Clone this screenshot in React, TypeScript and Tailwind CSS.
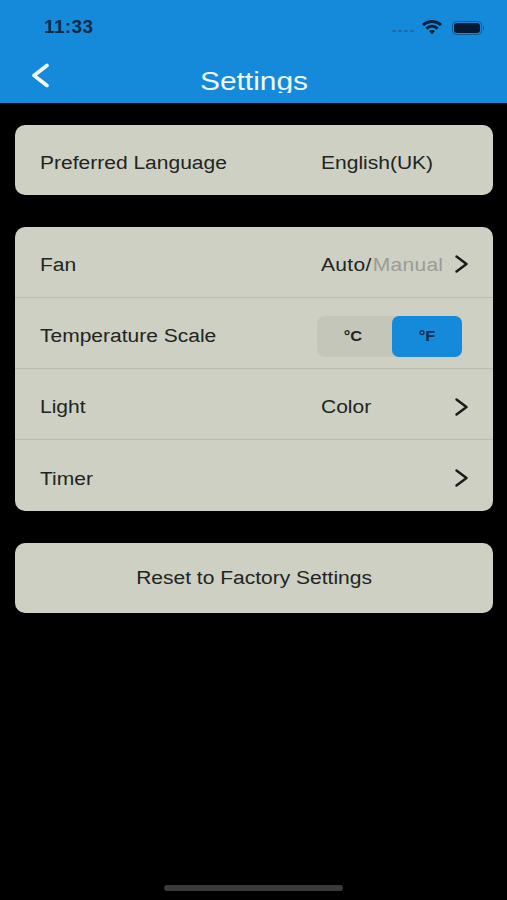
const font = "font-['Liberation_Sans',Arial,sans-serif]";

function Chevron({ lift = 0 }: { lift?: number }) {
  return (
    <svg width="16" height="20" viewBox="0 0 16 20" fill="none" className={`ml-auto shrink-0 ${lift ? "mb-[4px]" : "mb-[2px]"}`}>
      <path d="M2.5 2.5 L12.5 10 L2.5 17.5" stroke="#1b1b1b" strokeWidth="2.5" strokeLinecap="round" strokeLinejoin="round" />
    </svg>
  );
}

function Wide({ children }: { children: React.ReactNode }) {
  return <span className="inline-block origin-left scale-x-[1.167] whitespace-nowrap text-[18px] text-[#22241f]">{children}</span>;
}

function Row({ label, children, border = true }: { label: string; children?: React.ReactNode; border?: boolean }) {
  return (
    <div className={`flex h-[71px] items-center pl-[25px] pr-[23px] pt-[7px] ${border ? "border-b border-[#b9bbae]" : ""}`}>
      <div className="w-[281px] shrink-0">
        <Wide>{label}</Wide>
      </div>
      {children}
    </div>
  );
}

export default function App() {
  return (
    <div className={`${font} flex h-[900px] w-full flex-col overflow-hidden bg-black`}>
      <header className="relative h-[103px] shrink-0 bg-[#168ada]">
        <div className="flex h-[54px] items-center justify-between pl-[44px] pr-[23px] pt-[1px]">
          <span className="inline-block origin-left scale-x-[1.08] text-[17.5px] font-bold tracking-[0.4px] text-[#0b2a4a]">11:33</span>
          <div className="flex items-center gap-[6px]">
            <div className="mr-[2px] mt-[7px] flex gap-[2px]">
              <span className="h-[2px] w-[4px] rounded-full bg-[#1c6ba8]" />
              <span className="h-[2px] w-[4px] rounded-full bg-[#1c6ba8]" />
              <span className="h-[2px] w-[4px] rounded-full bg-[#1c6ba8]" />
              <span className="h-[2px] w-[4px] rounded-full bg-[#1c6ba8]" />
            </div>
            <svg width="20" height="15" viewBox="0 0 20 15" fill="none" className="mb-[1px] mr-[4px]">
              <path d="M1 5 C6 0.4 14 0.4 19 5" stroke="#04203a" strokeWidth="3" />
              <path d="M4.4 8.6 C7.8 5.5 12.2 5.5 15.6 8.6" stroke="#04203a" strokeWidth="3" />
              <path d="M7 11 L10 14.6 L13 11 C11.5 9.6 8.5 9.6 7 11 Z" fill="#04203a" />
            </svg>
            <div className="flex items-center">
              <div className="h-[14px] w-[30px] rounded-[4px] border border-[#145a92] p-[1px]">
                <div className="h-full w-full rounded-[3px] bg-[#031a32]" />
              </div>
              <span className="ml-[1px] h-[4px] w-[1px] bg-[#145a92]" />
            </div>
          </div>
        </div>
        <div className="absolute left-[31px] top-[63px]">
          <svg width="20" height="25" viewBox="0 0 20 25" fill="none">
            <path d="M16 2.5 L3 12.5 L16 22.5" stroke="#f4f9fd" strokeWidth="3.6" strokeLinecap="round" strokeLinejoin="round" />
          </svg>
        </div>
        <div className="absolute inset-x-0 top-[64px] flex h-[29px] justify-center overflow-hidden">
          <span className="inline-block scale-x-[1.15] text-[26px] leading-[34px] text-[#eef7fd]">Settings</span>
        </div>
      </header>

      <main className="flex flex-col gap-[32px] pl-[15px] pr-[14px] pt-[22px]">
        <section className="rounded-[10px] bg-[#cdd0c3]">
          <div className="flex h-[70px] items-center pl-[25px] pr-[23px] pt-[6px]">
            <div className="w-[281px] shrink-0">
              <Wide>Preferred Language</Wide>
            </div>
            <Wide>English(UK)</Wide>
          </div>
        </section>

        <section className="rounded-[10px] bg-[#cdd0c3]">
          <Row label="Fan">
            <span className="inline-block origin-left scale-x-[1.167] whitespace-nowrap text-[18px] tracking-[0.25px] text-[#22241f]">
              Auto/<span className="ml-[1px] text-[#9a9c94]">Manual</span>
            </span>
            <Chevron lift={1} />
          </Row>
          <Row label="Temperature Scale">
            <div className="ml-[-4px] flex h-[41px] w-[145px] rounded-[8px] bg-[#c3c6b9]">
              <div className="flex w-[72px] items-center justify-center">
                <span className="inline-block scale-x-[1.17] text-[14px] font-bold text-[#22241f]">°C</span>
              </div>
              <div className="ml-[3px] flex flex-1 items-center justify-center rounded-[7px] bg-[#168ada]">
                <span className="inline-block scale-x-[1.17] text-[14px] font-bold text-[#0b2a4a]">°F</span>
              </div>
            </div>
          </Row>
          <Row label="Light">
            <Wide>Color</Wide>
            <Chevron />
          </Row>
          <Row label="Timer" border={false}>
            <Chevron />
          </Row>
        </section>

        <section className="rounded-[10px] bg-[#cdd0c3]">
          <div className="flex h-[70px] items-center justify-center">
            <span className="inline-block scale-x-[1.167] whitespace-nowrap text-[18px] text-[#22241f]">Reset to Factory Settings</span>
          </div>
        </section>
      </main>

      <div className="mt-auto flex justify-center pb-[9px]">
        <div className="h-[6px] w-[179px] rounded-full bg-[#3a3a3a]" />
      </div>
    </div>
  );
}
